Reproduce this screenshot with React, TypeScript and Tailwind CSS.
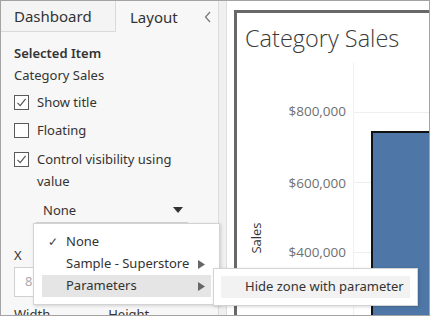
import React from "react";

const font = { fontFamily: '"Noto Sans", "Open Sans", Arial, sans-serif' };

function Check({ checked }: { checked: boolean }) {
  return (
    <div className="mt-[4px] h-[15px] w-[15px] shrink-0 border border-[#5a5a5a] bg-white flex items-center justify-center">
      {checked && (
        <svg width="11" height="11" viewBox="0 0 11 11">
          <path d="M1.5 5.8 L4.2 8.6 L9.6 1.8" fill="none" stroke="#555" strokeWidth="1.2" />
        </svg>
      )}
    </div>
  );
}

function Row({ checked, children }: { checked: boolean; children: React.ReactNode }) {
  return (
    <div className="flex items-start gap-[8px]">
      <Check checked={checked} />
      <div className="leading-[22px]">{children}</div>
    </div>
  );
}

function Arrow() {
  return (
    <svg width="7" height="9" viewBox="0 0 7 9">
      <path d="M0 0 L7 4.5 L0 9 Z" fill="#666" />
    </svg>
  );
}

export default function App() {
  return (
    <div
      className="relative flex h-[316px] w-[430px] overflow-hidden border border-[#a3a3a3] bg-white text-[#333]"
      style={font}
    >
      {/* Side panel */}
      <div className="flex w-[218px] shrink-0 flex-col border-r border-[#dcdcdc] bg-[#f7f7f7]">
        <div className="flex h-[31px] shrink-0">
          <div className="w-[115px] border-b border-r border-[#dadada] bg-[#f4f4f4] pl-[13px] text-[15px] leading-[30px]">
            Dashboard
          </div>
          <div className="flex flex-1 items-center justify-between pl-[14px] pr-[6px] text-[15px] leading-[30px]">
            <span>Layout</span>
            <svg width="8" height="12" viewBox="0 0 8 12">
              <path d="M6 1 L1.5 6 L6 11" fill="none" stroke="#777" strokeWidth="1.2" />
            </svg>
          </div>
        </div>

        <div className="flex flex-col px-[13px] pt-[10px] text-[13px]">
          <div className="font-semibold leading-[22px]">Selected Item</div>
          <div className="leading-[22px]">Category Sales</div>
          <div className="mt-[5px]">
            <Row checked>Show title</Row>
          </div>
          <div className="mt-[6px]">
            <Row checked={false}>Floating</Row>
          </div>
          <div className="mt-[7px]">
            <Row checked>
              Control visibility using
              <br />
              value
            </Row>
          </div>
          <div className="ml-[22px] mr-[17px] mt-[5px] flex h-[26px] items-center justify-between border-b border-[#d4d4d4] pl-[7px] pr-[5px]">
            <span className="leading-[22px]">None</span>
            <svg width="10" height="6" viewBox="0 0 10 6">
              <path d="M0 0 L10 0 L5 6 Z" fill="#333" />
            </svg>
          </div>
          <div className="mt-[21px] leading-[22px]">X</div>
          <div className="mt-[1px] flex h-[30px] w-[80px] items-center border border-[#d0d0d0] bg-white pl-[10px] text-[#aaa]">
            8
          </div>
          <div className="mt-[6px] flex gap-[58px] leading-[22px]">
            <span>Width</span>
            <span>Height</span>
          </div>
        </div>
      </div>

      {/* Splitter */}
      <div className="w-[8px] shrink-0 border-r border-[#dedede] bg-[#f0f0f0]" />

      {/* Canvas */}
      <div className="flex-1 bg-white pl-[7px] pt-[9px]">
        <div className="flex h-[330px] flex-col border-l-[3px] border-t-[3px] border-[#686868]">
          <div
            className="h-[50px] shrink-0 pl-[8px] text-[23.5px] font-light leading-[50px] text-[#3a3a3a]"
            style={{ fontFamily: '"Open Sans", "Noto Sans", sans-serif' }}
          >
            Category Sales
          </div>
          <svg width="200" height="260" className="block" style={{ fontFamily: '"Open Sans", "Noto Sans", sans-serif' }}>
            <line x1="116.5" y1="0" x2="116.5" y2="260" stroke="#f0f0f0" />
            <line x1="117" y1="49.5" x2="200" y2="49.5" stroke="#eeeeee" />
            <line x1="117" y1="119.5" x2="200" y2="119.5" stroke="#eeeeee" />
            <line x1="117" y1="189.5" x2="200" y2="189.5" stroke="#eeeeee" />
            <text x="109" y="53" textAnchor="end" fontSize="13.5" fill="#707070">$800,000</text>
            <text x="109" y="125" textAnchor="end" fontSize="13.5" fill="#707070">$600,000</text>
            <text x="109" y="194" textAnchor="end" fontSize="13.5" fill="#707070">$400,000</text>
            <text
              x="0"
              y="0"
              fontSize="13"
              fill="#333"
              textAnchor="middle"
              transform="translate(24 175) rotate(-90)"
            >
              Sales
            </text>
            <rect x="134" y="68" width="80" height="200" fill="#4e76a6" />
            <path d="M135 260 L135 69 L200 69" fill="none" stroke="#111" strokeWidth="2" />
          </svg>
        </div>
      </div>

      {/* Dropdown menu */}
      <div className="absolute left-[32px] top-[222px] h-[82px] w-[187px] border border-[#d3d3d3] bg-white pt-[7px] text-[13px] shadow-[1px_1px_3px_rgba(0,0,0,0.15)]">
        <div className="relative flex h-[22px] items-center pl-[32px]">
          <span className="absolute left-[14px] text-[12px] text-[#444]">✓</span>
          None
        </div>
        <div className="flex h-[22px] items-center justify-between pl-[32px] pr-[14px]">
          <span>Sample - Superstore</span>
          <Arrow />
        </div>
        <div className="mx-[8px] flex h-[22px] items-center justify-between bg-[#e5e5e5] pl-[24px] pr-[6px]">
          <span>Parameters</span>
          <Arrow />
        </div>
      </div>

      {/* Submenu */}
      <div className="absolute left-[212px] top-[267px] h-[38px] w-[205px] border border-[#d3d3d3] bg-white p-[7px] text-[13px] shadow-[1px_1px_3px_rgba(0,0,0,0.15)]">
        <div className="flex h-[22px] items-center bg-[#f2f2f2] pl-[24px]">Hide zone with parameter</div>
      </div>
    </div>
  );
}
